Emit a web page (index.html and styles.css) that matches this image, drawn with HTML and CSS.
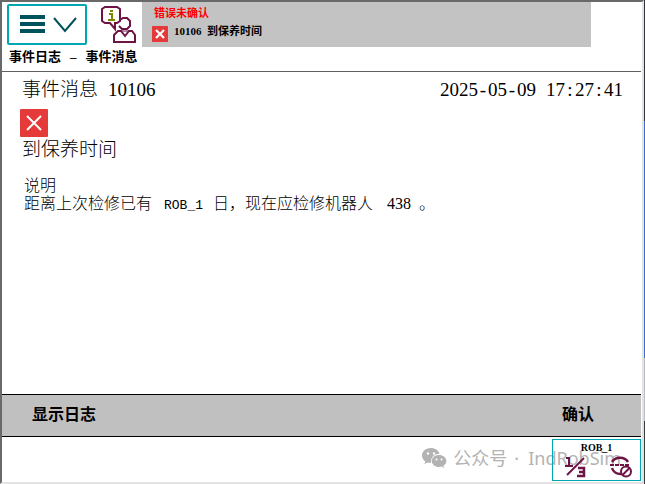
FILE: index.html
```html
<!DOCTYPE html>
<html lang="zh-CN">
<head>
  <meta charset="UTF-8">
  <title>事件日志</title>
  <link rel="stylesheet" href="styles.css">
</head>
<body>
  <div class="window">
    <header class="topbar">
      <button class="menu-btn" aria-label="菜单">
        <svg width="56" height="24" viewBox="0 0 56 24">
          <path d="M1 4h25M1 11h25M1 18h25" stroke="#00525c" stroke-width="4"/>
          <path d="M35 5l11 13L57 5" fill="none" stroke="#00525c" stroke-width="2"/>
        </svg>
      </button>
      <button class="operator-btn" aria-label="操作员信息">
        <svg width="35" height="37" viewBox="0 0 35 37" fill="none" stroke="#6e1445">
          <path d="M4 1h12l3 2v12l-3 2h-2v6l-5-6H4l-3-2V3z" stroke-width="2"/>
          <path d="M8 8h3v5M7 14h7M9 5h3" stroke="#7a8a00" stroke-width="2"/>
          <path d="M19 14l3-2h4l3 3v5l-3 3h-5l-3-3" stroke-width="2"/>
          <path d="M13 36V29l4-4h3l4 5 4-5h3l3 4v7z" stroke-width="2"/>
          <path d="M20 25h8" stroke-width="1"/>
        </svg>
      </button>
      <div class="status">
        <p class="status-title">错误未确认</p>
        <div class="status-line">
          <svg class="error-icon" width="16" height="16" viewBox="0 0 28 28"><rect width="28" height="28" rx="1" fill="#e53a3a"/><path d="M7 7l14 14M21 7L7 21" stroke="#fff" stroke-width="4"/></svg>
          <span class="status-text">10106&nbsp; 到保养时间</span>
        </div>
      </div>
    </header>

    <h1 class="page-title">事件日志<span class="dash">–</span>事件消息</h1>

    <main class="message">
      <div class="message-head">
        <h2>事件消息<span class="code">10106</span></h2>
        <time datetime="2025-05-09T17:27:41">2025<i>-</i>05<i>-</i>09<i> </i>17<i>:</i>27<i>:</i>41</time>
      </div>
      <svg class="error-icon" width="28" height="28" viewBox="0 0 28 28"><rect width="28" height="28" rx="1" fill="#e53a3a"/><path d="M7 7l14 14M21 7L7 21" stroke="#fff" stroke-width="2"/></svg>
      <h2 class="message-name">到保养时间</h2>
      <div class="details">
        <p>说明</p>
        <p>距离上次检修已有<span class="robot">ROB_1</span>日，现在应检修机器人<span class="number">438</span>。</p>
      </div>
    </main>

    <div class="actions">
      <button>显示日志</button>
      <button>确认</button>
    </div>

    <footer class="taskbar">
      <div class="channel">
        <svg width="25" height="20" viewBox="0 0 25 20" fill="#b3b3b3">
          <path d="M9 0C4 0 0 3 0 7.500c0 2.500 1.300 4.500 3.300 5.800L2.500 16l3.200-1.600c1 .3 2.200.5 3.300.5C8.500 9.500 12 6 17.500 5.700 16.500 2.400 13 0 9 0z"/>
          <path d="M17 7c-4 0-7.300 2.700-7.300 6s3.300 6 7.300 6c1 0 1.800-.1 2.600-.4L22 20l-.6-2.200c1.800-1.100 3-2.800 3-4.800C24.400 9.700 21 7 17 7z"/>
          <g fill="#fff"><circle cx="6" cy="5.500" r="1.200"/><circle cx="12" cy="5.500" r="1.200"/><circle cx="14.500" cy="11.500" r="1"/><circle cx="19.500" cy="11.500" r="1"/></g>
        </svg>
        <span>公众号<span class="dot">·</span>IndRobSim</span>
      </div>
      <button class="robot-btn">
        <span class="robot-name">ROB_1</span>
        <svg width="68" height="24" viewBox="0 0 68 24" fill="none" stroke="#6e1445" stroke-width="2">
          <path d="M1 3h3v8M0 11h8"/>
          <path d="M2 20L19 3"/>
          <path d="M13 13h6v8h-7M14 17h5" stroke-width="2.500"/>
          <path d="M47 7a9 8 0 0 1 16 0M47 13a9 8 0 0 0 9 6" stroke-width="2.500"/>
          <path d="M45 10h20" stroke-dasharray="4 1"/>
          <circle cx="61" cy="16.500" r="5" stroke-width="2"/>
          <path d="M57.500 20l7-7" stroke-width="2"/>
        </svg>
      </button>
    </footer>
  </div>
</body>
</html>
```
FILE: styles.css
```css
* {
  box-sizing: border-box;
}

/* Desktop strip showing past the right edge of the window */
body {
  margin: 0;
  padding-right: 1px;
  background: linear-gradient(#30323c 25%, #3f6fd0 25%, #3f6fd0 74%, #b8bcc4 74%, #b8bcc4 87%, #3a3d40 87%);
  color: #000;
  font-family: "Liberation Serif", "Noto Sans CJK SC", serif;
}

h1, h2, p {
  margin: 0;
}

button {
  padding: 0;
  border: none;
  background: none;
  color: inherit;
  font-family: inherit;
  cursor: pointer;
}

svg {
  display: block;
}

.window {
  display: flex;
  flex-direction: column;
  min-height: 100vh;
  padding-right: 1px;
  background: #fff;
  border-style: solid;
  border-width: 2px;
  border-color: #696969 #e3e3e3 #e3e3e3 #696969;
}

/* Top bar */
.topbar {
  display: flex;
  align-items: flex-start;
  height: 45px;
}

.menu-btn {
  display: flex;
  align-items: center;
  justify-content: center;
  width: 80px;
  height: 41px;
  margin: 2px 0 0 5px;
  border: 2px solid #00a7b3;
  border-radius: 2px;
}

.menu-btn svg {
  overflow: visible;
}

.operator-btn {
  margin: 4px 6px 0 14px;
}

.status {
  flex: 1;
  height: 45px;
  margin-right: 50px;
  padding: 3px 10px;
  background: #c3c3c3;
  font-size: 11px;
  font-weight: bold;
  line-height: 16px;
}

.status-title {
  padding-left: 2px;
  color: #f00;
}

.status-line {
  display: flex;
  align-items: flex-end;
  gap: 6px;
}

.status-text {
  margin-bottom: 3px;
}

.status .error-icon {
  margin-top: 5px;
}

.page-title {
  height: 25px;
  padding-left: 7px;
  border-bottom: 1px solid #606060;
  font-size: 13px;
  line-height: 20px;
}

.dash {
  padding: 0 9px;
}

/* Message */
.message {
  flex: 1;
  padding: 5px 18px;
}

.message-head {
  display: flex;
  justify-content: space-between;
}

h2,
time {
  padding-left: 2px;
  font-size: 19px;
  font-weight: 300;
  line-height: 26px;
}

.code {
  margin-left: 10px;
}

time i {
  display: inline-block;
  width: 10px;
  font-style: normal;
  text-align: center;
  white-space: pre;
}

.message .error-icon {
  margin-top: 6px;
}

.details {
  padding: 14px 4px;
  font-size: 16px;
  font-weight: 300;
  line-height: 18px;
}

.robot {
  padding: 0 10px 0 12px;
  font-family: "Liberation Mono", monospace;
  font-size: 13px;
}

.number {
  padding: 0 8px 0 14px;
}

/* Actions */
.actions {
  display: flex;
  justify-content: space-between;
  height: 43px;
  padding: 0 47px 6px 30px;
  border-top: 1px solid #000;
  border-bottom: 1px solid #000;
  background: #c0c0c0;
}

.actions button {
  font-size: 16px;
  font-weight: bold;
}

/* Taskbar */
.taskbar {
  position: relative;
  display: flex;
  justify-content: flex-end;
  height: 45px;
  padding: 2px 0 1px;
}

/* Watermark, runs underneath the robot button */
.channel {
  position: absolute;
  right: 20px;
  bottom: 11px;
  display: flex;
  align-items: center;
  gap: 6px;
  color: #b3b3b3;
  font-family: "Noto Sans", "Noto Sans CJK SC", sans-serif;
  font-size: 18px;
  line-height: 26px;
}

.dot {
  padding: 0 9px 0 7px;
}

.robot-btn {
  position: relative;
  width: 89px;
  height: 42px;
  border: 1px solid #00a7b3;
}

.robot-name {
  display: block;
  font-size: 10px;
  font-weight: bold;
  line-height: 14px;
}

.robot-btn svg {
  margin-left: 12px;
}
```
